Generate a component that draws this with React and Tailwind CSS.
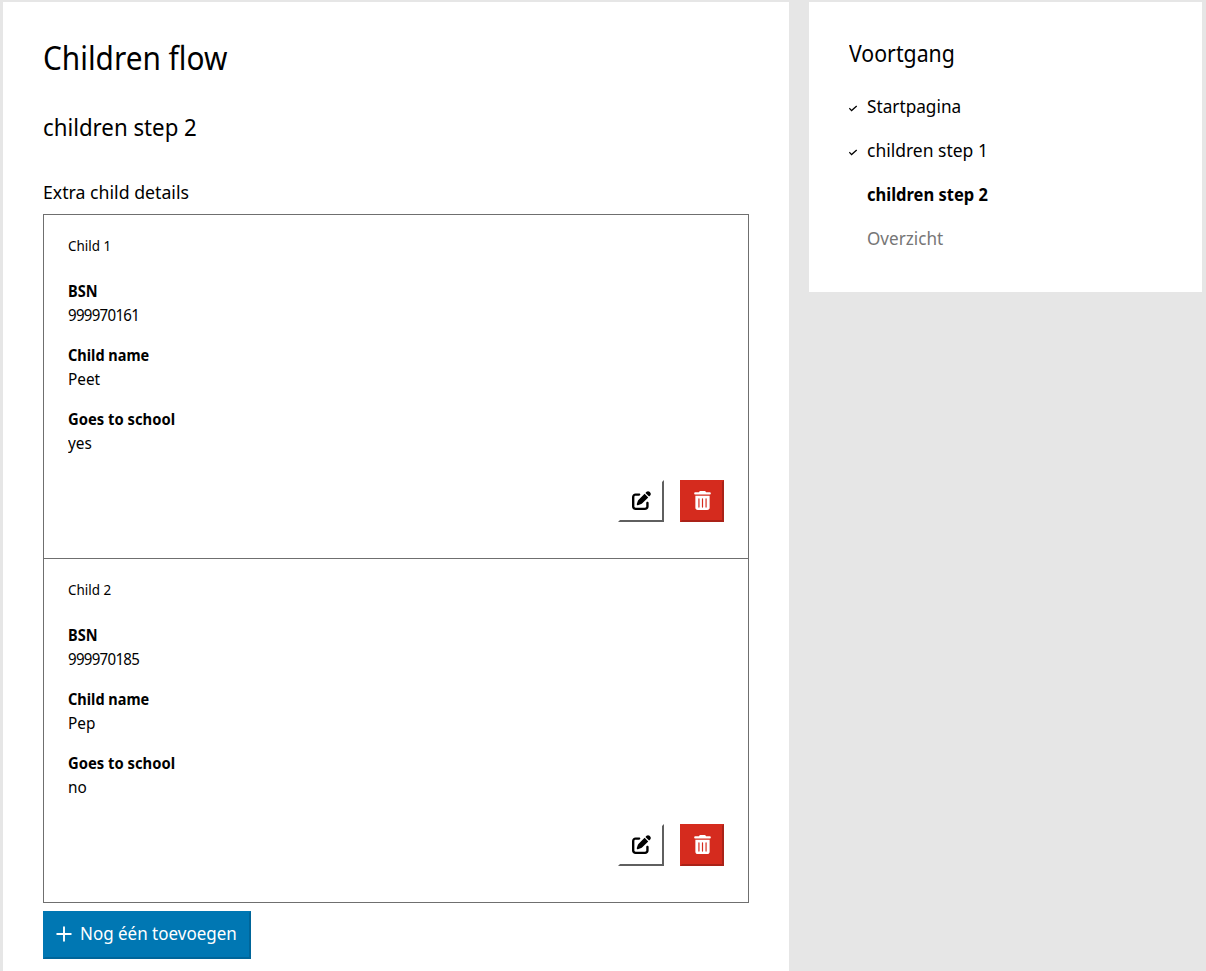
import { FaPenToSquare, FaTrashCan } from "react-icons/fa6";

const children = [
  { id: 1, bsn: "999970161", name: "Peet", school: "yes" },
  { id: 2, bsn: "999970185", name: "Pep", school: "no" },
];

function Check() {
  return (
    <svg viewBox="0 0 9 7" className="mt-1 h-[7px] w-[9px] shrink-0" fill="none" stroke="currentColor" strokeWidth="1.3">
      <path d="M0.3 3.2 2.6 5.6 7.7 1.1" />
    </svg>
  );
}

function Plus() {
  return (
    <svg viewBox="0 0 16 16" className="mb-[2px] size-4 shrink-0" fill="none" stroke="currentColor" strokeWidth="1.9" strokeLinecap="round">
      <path d="M8 1.2v13.6M1.2 8h13.6" />
    </svg>
  );
}

export default function App() {
  return (
    <div className="flex h-[971px] items-start gap-5 overflow-hidden bg-[#e6e6e6] pl-[3px] pt-[2px] font-['Noto_Sans',sans-serif] text-black">
      <main className="h-full w-[786px] shrink-0 bg-white px-10 pt-9">
        <h1 className="origin-left scale-x-[0.931] text-[32px] leading-10">Children flow</h1>
        <h2 className="mt-[33px] origin-left scale-x-[0.927] text-2xl leading-8">children step 2</h2>
        <p className="mt-[35px] origin-left scale-x-[0.957] text-[18.5px] leading-7">Extra child details</p>
        <div className="mt-2 border border-[#6f6f6f]">
          {children.map((c) => (
            <section key={c.id} className="flex h-[344px] flex-col border-[#6f6f6f] pr-6 pl-[23.5px] pt-5 last:h-[343px] not-last:border-b">
              <h3 className="origin-left scale-x-[0.96] text-sm leading-[22px]">Child {c.id}</h3>
              <dl className="mt-[22px] flex flex-col gap-4 text-base leading-6">
                <div>
                  <dt className="origin-left scale-x-[0.91] font-bold">BSN</dt>
                  <dd className="origin-left scale-x-[0.94] tracking-[-0.75px]">{c.bsn}</dd>
                </div>
                <div>
                  <dt className="origin-left scale-x-[0.906] font-bold">Child name</dt>
                  <dd className="origin-left scale-x-[0.96]">{c.name}</dd>
                </div>
                <div>
                  <dt className="origin-left scale-x-[0.924] font-bold">Goes to school</dt>
                  <dd className="origin-left scale-x-[0.96]">{c.school}</dd>
                </div>
              </dl>
              <div className="mt-[25px] flex justify-end gap-4">
                <button aria-label="Edit" className="flex h-[42px] w-[46px] items-center justify-center border-2 border-transparent border-b-[#5f5f5f] border-r-[#5f5f5f] pb-[2px] text-[19px]">
                  <FaPenToSquare />
                </button>
                <button aria-label="Delete" className="flex h-[42px] w-11 items-center justify-center border-2 border-[#d52b1e] border-b-[#aa2218] border-r-[#aa2218] bg-[#d52b1e] pb-[2px] text-[19px] text-white">
                  <FaTrashCan />
                </button>
              </div>
            </section>
          ))}
        </div>
        <button className="mt-2 flex h-12 w-[208px] items-center gap-2 border-2 border-[#0077b3] border-b-[#006599] border-r-[#006599] bg-[#0077b3] pl-[11px] text-[18.5px] text-white">
          <Plus />
          <span className="origin-left scale-x-[0.918] whitespace-nowrap pb-1">Nog één toevoegen</span>
        </button>
      </main>
      <aside className="h-[290px] w-[393px] shrink-0 bg-white px-10 pt-[35px]">
        <h2 className="origin-left scale-x-[0.887] text-2xl leading-8">Voortgang</h2>
        <ul className="mt-[23px] flex flex-col gap-4 text-[18.5px] leading-7">
          <li className="flex items-center gap-[9px]"><Check /><span className="origin-left scale-x-[0.93]">Startpagina</span></li>
          <li className="flex items-center gap-[9px]"><Check /><span className="origin-left scale-x-[0.945]">children step 1</span></li>
          <li className="pl-[18px] font-bold"><span className="inline-block origin-left scale-x-[0.892]">children step 2</span></li>
          <li className="pl-[18px] text-[#767676]"><span className="inline-block origin-left scale-x-[0.925]">Overzicht</span></li>
        </ul>
      </aside>
    </div>
  );
}
